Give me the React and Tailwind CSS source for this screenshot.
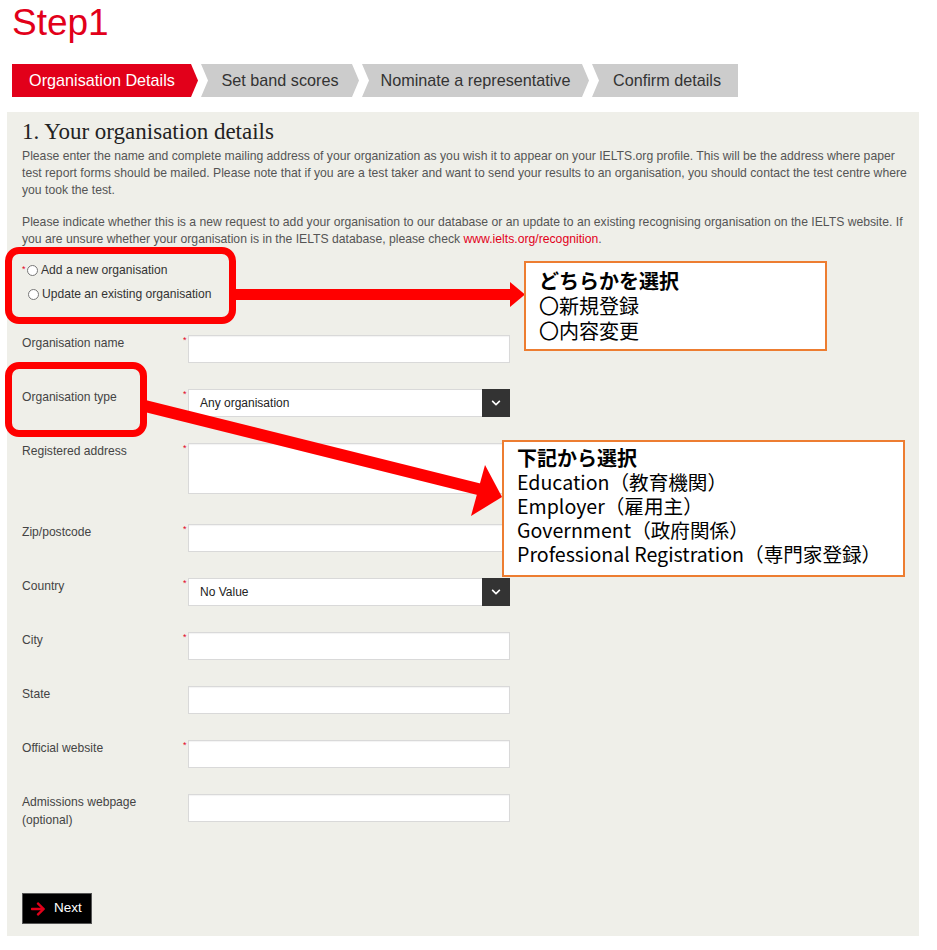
import React from 'react';
import { FaChevronDown, FaArrowRight } from 'react-icons/fa';

const tabs = [
  { label: 'Set band scores', w: 'w-[158px]' },
  { label: 'Nominate a representative', w: 'w-[227px]' },
];

function Field({ label, required = true, children, labelTwo }) {
  return (
    <div className="flex items-start">
      <div className="w-[161px] shrink-0 text-[12.1px] leading-[18px] text-[#444] -mt-[1px]">
        {label}
        {labelTwo && <br />}
        {labelTwo}
      </div>
      <div className="w-[5px] shrink-0 text-[9px] leading-[10px] text-[#e2001a]">{required ? '*' : ''}</div>
      {children}
    </div>
  );
}

function TextBox({ tall }) {
  return (
    <div
      className={`w-[322px] ${tall ? 'h-[51px]' : 'h-[28px]'} bg-white border border-[#d9d9d9] shadow-[inset_0_1px_1px_rgba(0,0,0,0.05)]`}
    />
  );
}

function SelectBox({ value }) {
  return (
    <div className="w-[322px] h-[28px] flex bg-white border border-[#d9d9d9]">
      <div className="flex-1 flex items-center pl-[11px] text-[12px] text-[#222]">{value}</div>
      <div className="w-[28px] -my-[1px] -mr-[1px] bg-[#333] flex items-center justify-center text-white">
        <FaChevronDown size={10} />
      </div>
    </div>
  );
}

export default function App() {
  return (
    <div className="relative w-[937px] h-[950px] bg-white font-['Liberation_Sans',Arial,sans-serif]">
      <div className="px-[12px] pt-[1px] h-[64px]">
        <h1 className="text-[37px] leading-[44px] text-[#e2001a]">Step1</h1>
      </div>

      {/* progress tabs */}
      <div className="flex gap-[3px] pl-[12px] h-[33px] text-[16.2px]">
        <div className="w-[186px] bg-[#e2001a] text-white flex items-center justify-center pr-[6px] [clip-path:polygon(0_0,calc(100%_-_7px)_0,100%_50%,calc(100%_-_7px)_100%,0_100%)]">
          Organisation Details
        </div>
        {tabs.map((t) => (
          <div
            key={t.label}
            className={`${t.w} bg-[#cccccc] text-[#333] flex items-center justify-center [clip-path:polygon(0_0,calc(100%_-_7px)_0,100%_50%,calc(100%_-_7px)_100%,0_100%,7px_50%)]`}
          >
            {t.label}
          </div>
        ))}
        <div className="w-[146px] bg-[#cccccc] text-[#333] flex items-center justify-center pl-[4px] [clip-path:polygon(0_0,100%_0,100%_100%,0_100%,7px_50%)]">
          Confirm details
        </div>
      </div>

      {/* main panel */}
      <div className="mx-[7px] mt-[15px] w-[912px] bg-[#efefe9] px-[15px] pt-[6px] pb-[12px]">
        <h2 className="font-['Liberation_Serif',Georgia,serif] text-[23px] leading-[28px] text-[#222] mb-[2px]">
          1. Your organisation details
        </h2>
        <p className="text-[12.2px] leading-[17px] text-[#555] whitespace-nowrap">
          Please enter the name and complete mailing address of your organization as you wish it to appear on your IELTS.org profile. This will be the address where paper
          <br />
          test report forms should be mailed. Please note that if you are a test taker and want to send your results to an organisation, you should contact the test centre where
          <br />
          you took the test.
        </p>
        <p className="mt-[15px] text-[12.2px] leading-[17px] text-[#555] whitespace-nowrap">
          Please indicate whether this is a new request to add your organisation to our database or an update to an existing recognising organisation on the IELTS website. If
          <br />
          you are unsure whether your organisation is in the IELTS database, please check{' '}
          <span className="text-[#e2001a]">www.ielts.org/recognition</span>.
        </p>

        <div className="mt-[10px] text-[12.1px] text-[#333]">
          <div className="flex items-center h-[24px]">
            <span className="text-[9px] text-[#e2001a] self-start mt-[5px] w-[5px]">*</span>
            <span className="w-[11px] h-[11px] rounded-full border border-[#777] bg-white mr-[3px]" />
            Add a new organisation
          </div>
          <div className="flex items-center h-[24px] pl-[6px]">
            <span className="w-[11px] h-[11px] rounded-full border border-[#777] bg-white mr-[3px]" />
            Update an existing organisation
          </div>
        </div>

        <div className="mt-[29px] flex flex-col gap-[26px]">
          <Field label="Organisation name">
            <TextBox />
          </Field>
          <Field label="Organisation type">
            <SelectBox value="Any organisation" />
          </Field>
          <div className="mb-[4px]">
            <Field label="Registered address">
              <TextBox tall />
            </Field>
          </div>
          <Field label="Zip/postcode">
            <TextBox />
          </Field>
          <Field label="Country">
            <SelectBox value="No Value" />
          </Field>
          <Field label="City">
            <TextBox />
          </Field>
          <Field label="State" required={false}>
            <TextBox />
          </Field>
          <Field label="Official website">
            <TextBox />
          </Field>
          <Field label="Admissions webpage" labelTwo="(optional)" required={false}>
            <TextBox />
          </Field>
        </div>

        <button className="mt-[64px] w-[70px] h-[31px] bg-black border border-[#555] flex items-center pl-[7px] gap-[8px] text-white text-[13.5px]">
          <FaArrowRight size={16} className="text-[#e2001a]" />
          Next
        </button>
      </div>

      {/* annotation overlay */}
      <svg className="absolute left-0 top-0 pointer-events-none" width="937" height="950">
        <rect x="234" y="289" width="278" height="11" fill="#ff0000" />
        <polygon points="510,282 525,294.5 510,307" fill="#ff0000" />
        <line x1="145" y1="406" x2="482" y2="490" stroke="#ff0000" strokeWidth="12" />
        <polygon points="485,465 471,516 502,497" fill="#ff0000" />
      </svg>
      <div className="absolute left-[5px] top-[247px] w-[231px] h-[77px] border-[7px] border-[#ff0000] rounded-[14px]" />
      <div className="absolute left-[5px] top-[362px] w-[142px] h-[75px] border-[7px] border-[#ff0000] rounded-[14px]" />

      <div className="absolute left-[524px] top-[261px] w-[303px] h-[90px] bg-white border-2 border-[#ed7d31] pl-[13px] pt-[5px] text-[20px] leading-[25px] text-black font-['Noto_Sans_CJK_JP',sans-serif]">
        <div className="font-bold">どちらかを選択</div>
        <div>〇新規登録</div>
        <div>〇内容変更</div>
      </div>

      <div className="absolute left-[502px] top-[440px] w-[403px] h-[137px] bg-white border-2 border-[#ed7d31] pl-[13px] pt-[4px] text-[19.6px] leading-[24px] text-black font-['Noto_Sans_CJK_JP',sans-serif] whitespace-nowrap">
        <div className="font-bold text-[20px]">下記から選択</div>
        <div>Education（教育機関）</div>
        <div>Employer（雇用主）</div>
        <div>Government（政府関係）</div>
        <div>Professional Registration（専門家登録）</div>
      </div>
    </div>
  );
}
